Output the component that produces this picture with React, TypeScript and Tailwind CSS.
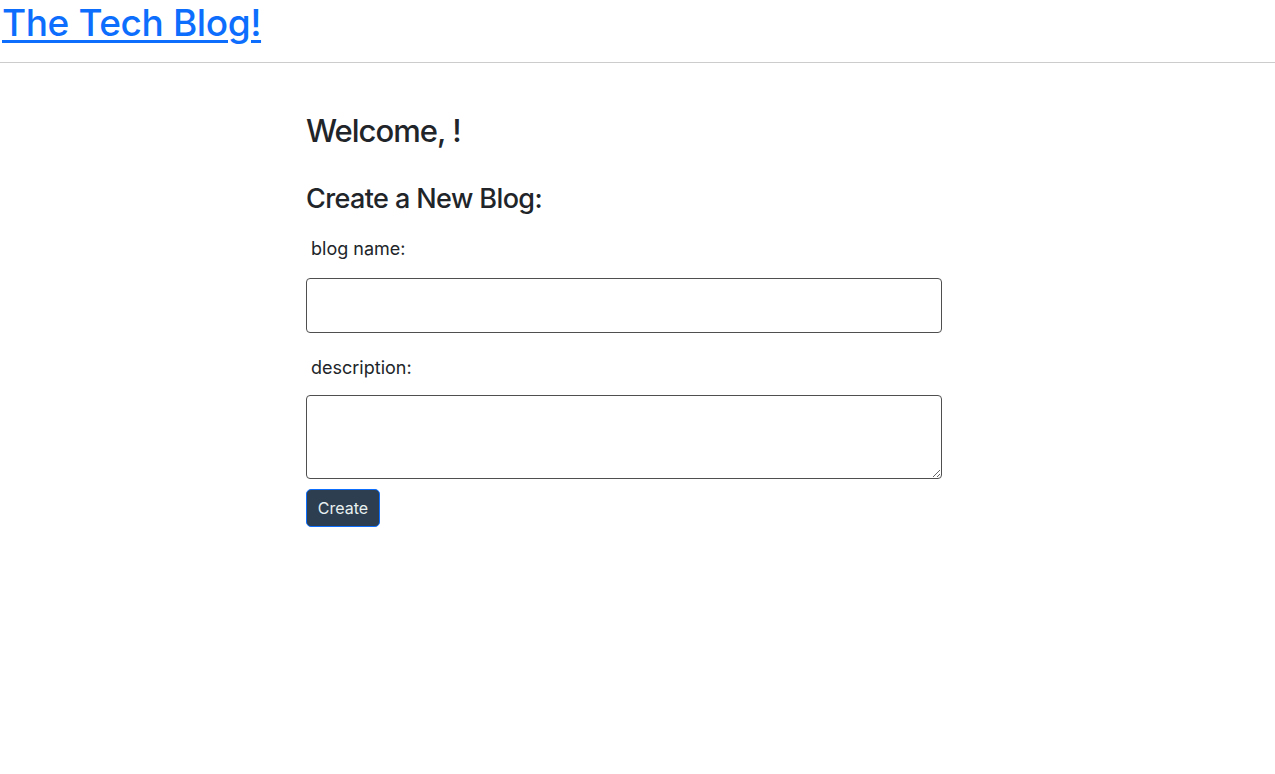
const font = { fontFamily: "Inter, 'Noto Sans', sans-serif" };

const App = () => {
  return (
    <div className="min-h-screen bg-white text-[#212529]" style={font}>
      <header className="h-[63px] border-b border-[#cccccc]">
        <a
          href="#"
          className="block pl-[2px] text-[37px] font-medium leading-[46px] tracking-[-0.4px] text-[#0d6efd] underline decoration-[3px] underline-offset-[4px]"
        >
          The Tech Blog!
        </a>
      </header>

      <main className="ml-[306px] w-[636px] pt-[48px]">
        <h2 className="text-[31px] font-medium leading-[40px] tracking-[-1px]">Welcome, !</h2>

        <form className="mt-[31px] flex flex-col">
          <h3 className="text-[27px] font-medium leading-[33px] tracking-[-0.6px]">Create a New Blog:</h3>

          <label className="mt-[21px] pl-[5px] text-[18px] leading-[26px]">blog name:</label>
          <input
            type="text"
            className="mt-[16px] h-[55px] w-full rounded-[4px] border border-[#4f4f4f] px-3 focus:outline-none"
          />

          <label className="mt-[22px] pl-[5px] text-[18px] leading-[26px]">description:</label>
          <textarea className="mt-[14px] h-[84px] w-full rounded-[4px] border border-[#4f4f4f] px-3 py-2 focus:outline-none" />

          <div className="mt-[10px]">
            <button
              type="submit"
              className="h-[38px] w-[74px] rounded-[5px] border border-[#0d6efd] bg-[#2c3e50] text-[16px] text-[#e8f0f0]"
            >
              Create
            </button>
          </div>
        </form>
      </main>
    </div>
  );
};

export default App;
